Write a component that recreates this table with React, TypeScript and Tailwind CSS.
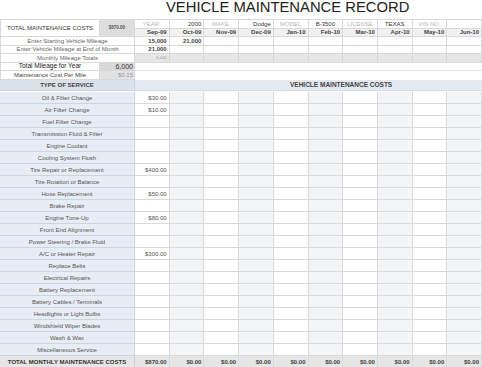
const months = ["Sep-09", "Oct-09", "Nov-09", "Dec-09", "Jan-10", "Feb-10", "Mar-10", "Apr-10", "May-10", "Jun-10"];

const services: [string, string][] = [
  ["Oil & Filter Change", "$30.00"],
  ["Air Filter Change", "$10.00"],
  ["Fuel Filter Change", ""],
  ["Transmission Fluid & Filter", ""],
  ["Engine Coolant", ""],
  ["Cooling System Flush", ""],
  ["Tire Repair or Replacement", "$400.00"],
  ["Tire Rotation or Balance", ""],
  ["Hose Replacement", "$50.00"],
  ["Brake Repair", ""],
  ["Engine Tune-Up", "$80.00"],
  ["Front End Alignment", ""],
  ["Power Steering / Brake Fluid", ""],
  ["A/C or Heater Repair", "$300.00"],
  ["Replace Belts", ""],
  ["Electrical Repairs", ""],
  ["Battery Replacement", ""],
  ["Battery Cables / Terminals", ""],
  ["Headlights or Light Bulbs", ""],
  ["Windshield Wiper Blades", ""],
  ["Wash & Wax", ""],
  ["Miscellaneous Service", ""],
];

// vehicle info in the first header row: [text, is label, align]
const info: [string, boolean, string][] = [
  ["YEAR:", true, "justify-center"],
  ["2000", false, "justify-end"],
  ["MAKE:", true, "justify-center"],
  ["Dodge", false, "justify-end"],
  ["MODEL", true, "justify-center"],
  ["B-3500", false, "justify-center"],
  ["LICENSE", true, "justify-center"],
  ["TEXAS", false, "justify-center"],
  ["VIN NO.", true, "justify-center"],
  ["", false, "justify-center"],
];

const startMiles = ["15,000", "21,000", "", "", "", "", "", "", "", ""];
const endMiles = ["21,000", "", "", "", "", "", "", "", "", ""];
const totals = ["$870.00", "$0.00", "$0.00", "$0.00", "$0.00", "$0.00", "$0.00", "$0.00", "$0.00", "$0.00"];

const cell = "flex items-center border-r border-b border-[#d9d9d9] overflow-hidden whitespace-nowrap";

export default function App() {
  return (
    <div className="w-[482px] h-[367px] bg-white font-['Liberation_Sans',Arial,sans-serif] text-[#555] overflow-hidden">
      {/* Title */}
      <div className="h-[19px] pl-[166px] text-[14.8px] leading-none text-[#222]">
        VEHICLE MAINTENANCE RECORD
      </div>

      {/* Header block */}
      <div className="grid grid-cols-[100px_35px_repeat(10,minmax(0,1fr))] grid-rows-[repeat(7,8.5px)] border-t border-[#d9d9d9] text-[6px] leading-none">
        <div className={`${cell} row-span-2 border-l justify-center text-[#333]`}>TOTAL MAINTENANCE COSTS</div>
        <div className={`${cell} row-span-2 justify-center bg-[#dedede] text-[4.5px] font-bold text-[#555]`}>$870.00</div>

        {info.map(([t, label, align], i) => (
          <div key={"i" + i} className={`${cell} ${align} px-[2px] ${label ? "text-[#b5b5b5]" : "text-[#333]"}`}>
            {t}
          </div>
        ))}
        {months.map((m) => (
          <div key={m} className={`${cell} justify-end px-[2px] bg-[#f1f1f1] font-bold text-[#444]`}>
            {m}
          </div>
        ))}

        <div className={`${cell} col-span-2 border-l justify-center text-[#666]`}>Enter Starting Vehicle Mileage</div>
        {startMiles.map((v, i) => (
          <div key={"s" + i} className={`${cell} justify-end px-[2px] font-bold text-[#444]`}>{v}</div>
        ))}

        <div className={`${cell} col-span-2 border-l justify-center text-[#666]`}>Enter Vehicle Mileage at End of Month</div>
        {endMiles.map((v, i) => (
          <div key={"e" + i} className={`${cell} justify-end px-[2px] font-bold text-[#444]`}>{v}</div>
        ))}

        <div className={`${cell} col-span-2 border-l justify-center text-[#666]`}>Monthly Mileage Totals</div>
        {months.map((m, i) => (
          <div key={"t" + m} className={`${cell} justify-end px-[2px] bg-[#e6e6e6] text-[4.2px] text-[#999]`}>
            {i === 0 ? "6,000" : ""}
          </div>
        ))}

        <div className={`${cell} border-l justify-center text-[6.5px] text-[#222]`}>Total Mileage for Year</div>
        <div className={`${cell} justify-end px-[1px] bg-[#d9d9d9] text-[7px] text-[#333]`}>6,000</div>
        <div className="col-span-10 border-b border-[#e3e3e3]" />

        <div className={`${cell} border-l justify-center text-[#444]`}>Maintenance Cost Per Mile</div>
        <div className={`${cell} justify-end px-[1px] bg-[#e2e2e2] text-[#999]`}>$0.15</div>
        <div className="col-span-10" />
      </div>

      {/* Service table */}
      <div className="mt-[0.5px] grid grid-cols-[135px_repeat(10,minmax(0,1fr))] auto-rows-[12px] text-[6px] leading-none">
        <div className="flex items-center justify-center border-r border-b border-[#cdd4df] bg-[#dce2ec] font-bold text-[#444] h-[11px]">
          TYPE OF SERVICE
        </div>
        <div className="col-span-10 flex items-center pl-[155px] border-b border-[#d6dce6] bg-[#e4e9f1] text-[6.5px] font-bold text-[#444] h-[11px]">
          VEHICLE MAINTENANCE COSTS
        </div>

        {services.map(([name, val]) => (
          <div key={name} className="contents">
            <div className="flex items-center justify-center border-r border-b border-[#cdd4df] bg-[#e8ecf4] text-[#555] whitespace-nowrap">
              {name}
            </div>
            {months.map((m, i) => (
              <div
                key={m}
                className={`${cell} justify-end px-[2px] text-[#555] ${i % 2 === 1 ? "bg-[#f4f5f7]" : "bg-white"}`}
              >
                {i === 0 ? val : ""}
              </div>
            ))}
          </div>
        ))}

        <div className="flex items-center justify-center border-r border-b border-[#d0d0d0] bg-[#e6e6e6] font-bold text-[#333] whitespace-nowrap">
          TOTAL MONTHLY MAINTENANCE COSTS
        </div>
        {totals.map((v, i) => (
          <div key={"tt" + i} className={`${cell} justify-end px-[2px] bg-[#e6e6e6] font-bold text-[#444]`}>
            {v}
          </div>
        ))}
      </div>
    </div>
  );
}
